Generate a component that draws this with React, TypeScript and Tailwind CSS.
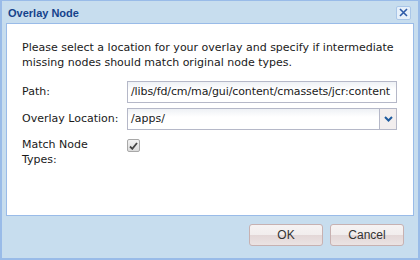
import React from "react";

const font = { fontFamily: '"Liberation Sans", Arial, sans-serif' };
const body = { fontFamily: '"DejaVu Sans", Verdana, sans-serif' };

function Btn({ label }: { label: string }) {
  return (
    <button className="w-[74px] h-[22px] rounded-[3px] border border-[#c7b1b1] bg-[linear-gradient(#f6f3f3_0%,#f1eded_50%,#e3d7d7_51%,#ebe3e3_100%)] text-[12px] text-[#333] flex items-center justify-center">
      {label}
    </button>
  );
}

export default function App() {
  return (
    <div
      style={font}
      className="w-[420px] h-[260px] bg-[#c7ddee] border-x-2 border-t border-b-2 border-[#99bbe8] flex flex-col px-[4px]"
    >
      <div className="h-[22px] flex items-center justify-between pl-[2px] pr-[3px]">
        <span className="text-[11px] font-bold text-[#15428b] pt-[2px]">Overlay Node</span>
        <div className="w-[15px] h-[14px] mt-[1px] rounded-[2px] border border-[#a9c6e8] bg-[#e6f0fa] flex items-center justify-center">
          <svg width="9" height="9" viewBox="0 0 9 9">
            <path d="M1 1L8 8M8 1L1 8" stroke="#2d5aa8" strokeWidth="1.6" />
          </svg>
        </div>
      </div>
      <div style={body} className="h-[193px] bg-white border border-[#99bbe8] px-[15px] pt-[16px] text-[11px] text-[#1a1a1a]">
        <p className="leading-[15px]">
          Please select a location for your overlay and specify if intermediate missing nodes should match original node types.
        </p>
        <div className="flex items-center mt-[11px]">
          <div className="w-[105px]">Path:</div>
          <div className="w-[270px] h-[22px] border border-[#b5b8c8] bg-[linear-gradient(#eef1f5_0%,#ffffff_40%)] flex items-center pl-[3px] overflow-hidden whitespace-nowrap tracking-[-0.1px]">
            /libs/fd/cm/ma/gui/content/cmassets/jcr:content
          </div>
        </div>
        <div className="flex items-center mt-[5px]">
          <div className="w-[105px]">Overlay Location:</div>
          <div className="w-[270px] h-[22px] border border-[#b5b8c8] flex">
            <div className="flex-1 bg-[linear-gradient(#eef1f5_0%,#ffffff_40%)] flex items-center pl-[3px]">/apps/</div>
            <div className="w-[17px] border-l border-[#b5b8c8] bg-[#f2eeee] flex items-center justify-center">
              <svg width="9" height="6" viewBox="0 0 9 6">
                <path d="M1 1L4.5 4.5L8 1" stroke="#1e5b9e" strokeWidth="2" fill="none" />
              </svg>
            </div>
          </div>
        </div>
        <div className="flex items-start mt-[7px]">
          <div className="w-[105px] leading-[15px]">
            Match Node
            <br />
            Types:
          </div>
          <div className="mt-[2px] w-[13px] h-[13px] rounded-[2px] border border-[#a8a8a8] bg-[linear-gradient(#f2f2f2,#dcdcdc)] flex items-center justify-center">
            <svg width="9" height="8" viewBox="0 0 9 8">
              <path d="M1 4.5L3.3 6.8L8 1" stroke="#444" strokeWidth="1.8" fill="none" />
            </svg>
          </div>
        </div>
      </div>
      <div className="flex justify-end gap-[7px] pt-[8px] pr-[10px]">
        <Btn label="OK" />
        <Btn label="Cancel" />
      </div>
    </div>
  );
}
